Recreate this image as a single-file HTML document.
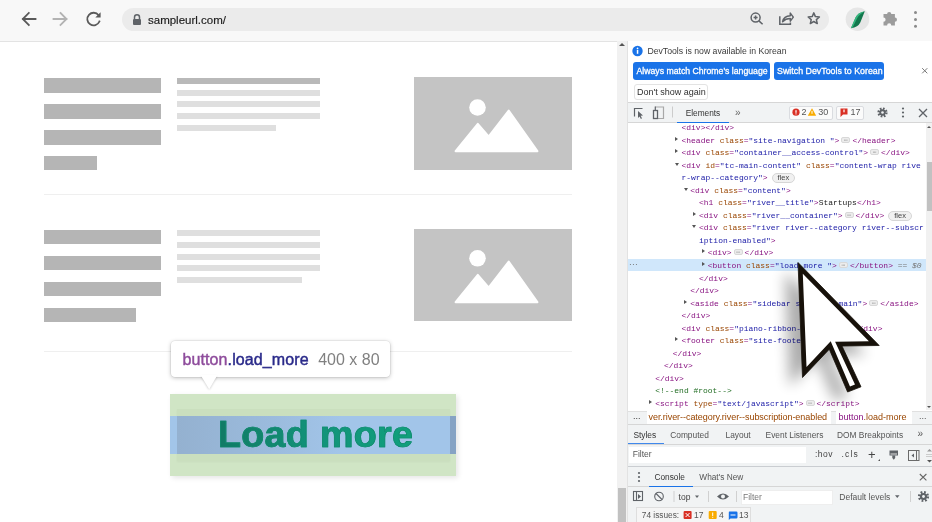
<!DOCTYPE html>
<html><head><meta charset="utf-8">
<style>
*{margin:0;padding:0;box-sizing:border-box}
html,body{width:932px;height:522px;overflow:hidden;background:#fff;font-family:"Liberation Sans",sans-serif;position:relative}
.a{position:absolute}
.bar{position:absolute;background:#b5b5b5}
.ln{position:absolute;background:#dfdfdf;height:6px}
.mono{font-family:"Liberation Mono",monospace;font-size:7.98px;white-space:pre;line-height:12.4px}
.t{color:#881280}.n{color:#994500}.v{color:#1a1aa6}.c{color:#236e25}.k{color:#222}
.tri{position:absolute;width:0;height:0}
.dots{display:inline-block;width:9px;height:6px;line-height:6px;font-size:6px;text-align:center;background:#ececec;border:1px solid #d8d8d8;border-radius:2px;color:#777;margin:0 2px;vertical-align:1px}
.flex{display:inline-block;font-family:"Liberation Sans",sans-serif;font-size:7.5px;line-height:8px;padding:0 5px;margin-left:4px;background:#f1f1f1;border:1px solid #d6d6d6;border-radius:5px;color:#444;vertical-align:0}
.eq{color:#777;font-style:italic}
.ui{font-size:9px;color:#333;white-space:nowrap}
#root{position:absolute;left:0;top:0;width:932px;height:522px;overflow:hidden;background:#fff;filter:blur(.3px)}
</style></head><body><div id="root">

<!-- browser toolbar -->
<div class="a" style="left:0;top:0;width:932px;height:41.6px;background:#f8f8f8;border-bottom:1px solid #e3e3e3"></div>
<svg class="a" style="left:0;top:0" width="932" height="41">
  <g fill="none" stroke-width="1.8" stroke-linecap="square">
    <path d="M23 19H35.5M28.8 12.9L22.8 19L28.8 25.1" stroke="#5a5a5a"/>
    <path d="M53.5 19H66.5M60.5 12.9L66.5 19L60.5 25.1" stroke="#b3b3b3"/>
    <path d="M98.6 15.2A6.3 6.3 0 1 0 99.4 21.5" stroke="#5a5a5a"/>
  </g>
  <path d="M95.3 17.6L100.6 17.6L100.6 12.3Z" fill="#5a5a5a"/>
</svg>
<div class="a" style="left:122px;top:7.8px;width:707px;height:23.4px;border-radius:11.7px;background:#ebebeb"></div>
<svg class="a" style="left:130px;top:12px" width="14" height="14">
  <path d="M4.5 7V5.2A2.5 2.5 0 0 1 9.5 5.2V7" fill="none" stroke="#5f6368" stroke-width="1.5"/>
  <rect x="3" y="7" width="8" height="6" rx="1" fill="#5f6368"/>
</svg>
<div class="a" style="left:148px;top:12.5px;font-size:11.5px;color:#1a1a1a;line-height:14px;-webkit-text-stroke:.15px #1a1a1a">sampleurl.com/</div>
<svg class="a" style="left:740px;top:0" width="192" height="41">
  <g fill="none" stroke="#5f6368" stroke-width="1.5">
    <circle cx="15.6" cy="17.6" r="4.5"/><path d="M18.9 20.9L22.6 24.3M13.6 17.6H17.6M15.6 15.6V19.6"/>
    <path d="M39.8 16.3V24.2H50.4V22.6"/><path d="M42.6 21.6C43.4 17.8 46.2 15.8 50.3 15.7V13.1L53.3 17.1L50.3 21.1V18.6C46.8 18.6 44.6 19.6 42.6 21.6Z" stroke-linejoin="round"/>
    <path d="M73.80 12.90L75.39 16.62L79.41 16.98L76.37 19.63L77.27 23.57L73.80 21.50L70.33 23.57L71.23 19.63L68.19 16.98L72.21 16.62Z" stroke-linejoin="round"/>
  </g>
  <circle cx="117.5" cy="19.2" r="11.8" fill="#e6e6e6"/>
  <path d="M110.9 28.3L115.5 17.5Q117.5 12.8 124.8 11.2L120.3 22.5Q118.2 27 110.9 28.3Z" fill="#12774c"/>
  <path d="M110.9 28.3L115.5 17.5Q117.5 12.8 124.8 11.2Q118.8 14.5 117 18.5L112.6 27.6Z" fill="#3cc58a" opacity=".8"/>
  <path d="M143.5 14h3.6a2.1 2.1 0 0 1 4.2 0h3.6v3.6a2.1 2.1 0 0 1 0 4.2v3.6h-3.6a2.1 2.1 0 0 0-4.2 0h-3.6v-3.6a2.1 2.1 0 0 0 0-4.2z" fill="#9c9c9c"/>
  <g fill="#8a8a8a"><circle cx="175.5" cy="12.4" r="1.5"/><circle cx="175.5" cy="19.4" r="1.5"/><circle cx="175.5" cy="26.2" r="1.5"/></g>
</svg>

<!-- page content -->
<div id="page">
  <div class="bar" style="left:44px;top:78px;width:117px;height:14.5px"></div>
  <div class="bar" style="left:44px;top:104px;width:117px;height:14.5px"></div>
  <div class="bar" style="left:44px;top:130px;width:117px;height:14.5px"></div>
  <div class="bar" style="left:44px;top:155.5px;width:53px;height:14.5px"></div>
  <div class="ln" style="left:177px;top:77.5px;width:143px;background:#b9b9b9"></div>
  <div class="ln" style="left:177px;top:89.5px;width:143px"></div>
  <div class="ln" style="left:177px;top:101px;width:143px"></div>
  <div class="ln" style="left:177px;top:113px;width:143px"></div>
  <div class="ln" style="left:177px;top:125px;width:99px"></div>
  <svg class="a" style="left:414px;top:77px" width="158" height="93"><rect width="158" height="93" fill="#c4c4c4"/>
    <circle cx="63.5" cy="30.5" r="8.3" fill="#fff"/>
    <path d="M41.6 74.2L63.8 46.9L74.6 59.5L94.7 33.5L123.4 74.2Z" fill="#fff" stroke="#fff" stroke-width="2" stroke-linejoin="round"/></svg>
  <div class="a" style="left:44px;top:194px;width:528px;height:1px;background:#efefef"></div>

  <div class="bar" style="left:44px;top:229.6px;width:117px;height:14.5px"></div>
  <div class="bar" style="left:44px;top:255.7px;width:117px;height:14.5px"></div>
  <div class="bar" style="left:44px;top:281.5px;width:117px;height:14.5px"></div>
  <div class="bar" style="left:44px;top:307.7px;width:92px;height:14.5px"></div>
  <div class="ln" style="left:177px;top:229.6px;width:143px"></div>
  <div class="ln" style="left:177px;top:242px;width:143px"></div>
  <div class="ln" style="left:177px;top:253.7px;width:143px"></div>
  <div class="ln" style="left:177px;top:265.4px;width:143px"></div>
  <div class="ln" style="left:177px;top:277.2px;width:125px"></div>
  <svg class="a" style="left:414px;top:229px" width="158" height="92"><rect width="158" height="92" fill="#c4c4c4"/>
    <circle cx="63.5" cy="29.3" r="8.3" fill="#fff"/>
    <path d="M41.6 73.2L63.8 45.9L74.6 58.5L94.7 32.5L123.4 73.2Z" fill="#fff" stroke="#fff" stroke-width="2" stroke-linejoin="round"/></svg>
  <div class="a" style="left:44px;top:351px;width:528px;height:1px;background:#efefef"></div>

  <!-- highlight -->
  <div class="a" style="left:170px;top:394px;width:286px;height:82px;background:#d0e5c5;box-shadow:2px 2px 5px rgba(0,0,0,.1)"></div>
  <div class="a" style="left:177px;top:409px;width:273px;height:52px;background:rgba(60,90,40,.045);box-shadow:0 1px 2px rgba(0,0,0,.04)"></div>
  <div class="a" style="left:170px;top:416px;width:286px;height:37.5px;background:#a2c5e9"></div>
  <div class="a" style="left:177px;top:416px;width:273px;height:37.5px;background:linear-gradient(90deg,#94b1d0 0%,#9bbbdd 35%,#a2c5e9 60%,#a2c5e9 100%)"></div>
  <div class="a" style="left:450px;top:416px;width:6px;height:37.5px;background:#86a3c4"></div>
  <div class="a" style="left:218px;top:414.5px;font-size:36px;font-weight:bold;line-height:40px;white-space:nowrap;letter-spacing:.3px;transform:scaleX(1.045);transform-origin:0 0;-webkit-text-stroke:.7px #118a6c;background:linear-gradient(90deg,#117a64,#12937a 50%,#10a07c);-webkit-background-clip:text;background-clip:text;color:transparent">Load more</div>

  <!-- tooltip -->
  <div class="a" style="left:171px;top:341px;width:218.5px;height:35.7px;background:#fff;border-radius:4px;box-shadow:0 0 0 .6px rgba(0,0,0,.08),0 1px 4px rgba(0,0,0,.25)"></div>
  <svg class="a" style="left:195px;top:370px" width="30" height="24"><defs><filter id="ts" x="-50%" y="-50%" width="200%" height="200%"><feGaussianBlur stdDeviation="1"/></filter></defs>
    <path d="M6 6.5L14.2 19.8L22 6.5Z" fill="#000" opacity=".22" filter="url(#ts)"/>
    <path d="M5.5 5L14.2 19.3L22.5 5Z" fill="#fff"/></svg>
  <div class="a" style="left:182.5px;top:350.5px;font-size:16px;line-height:18px;white-space:nowrap"><span style="color:#8e4c9c;letter-spacing:.1px;-webkit-text-stroke:.45px #8e4c9c">button</span><span style="color:#2a2a8a;letter-spacing:.1px;-webkit-text-stroke:.45px #2a2a8a">.load_more</span><span style="color:#808080;margin-left:9.5px">400 x 80</span></div>
</div>

<!-- page scrollbar -->
<div class="a" style="left:617px;top:41px;width:10px;height:481px;background:#f1f1f1"></div>
<div class="tri" style="left:618.5px;top:43px;border-left:3px solid transparent;border-right:3px solid transparent;border-bottom:3px solid #555"></div>
<div class="a" style="left:618px;top:488px;width:8px;height:34px;background:#c1c1c1"></div>

<!-- devtools -->
<div class="a" style="left:627px;top:41px;width:305px;height:481px;background:#fff;border-left:1px solid #e2e2e2"></div>
<!-- infobar -->
<svg class="a" style="left:631px;top:45px" width="13" height="13"><circle cx="6.5" cy="6" r="5.2" fill="#1a73e8"/><rect x="5.8" y="5" width="1.5" height="3.8" fill="#fff"/><circle cx="6.55" cy="3.4" r=".85" fill="#fff"/></svg>
<div class="a ui" style="left:647.4px;top:46px;font-size:8.7px;line-height:11px;color:#3a3a3a">DevTools is now available in Korean</div>
<div class="a" style="left:633px;top:62px;width:137px;height:18px;background:#1a73e8;border-radius:3px"></div>
<div class="a ui" style="left:636.5px;top:65.5px;font-size:8.7px;line-height:11px;color:#fff;-webkit-text-stroke:.3px #fff">Always match Chrome's language</div>
<div class="a" style="left:774px;top:62px;width:110px;height:18px;background:#1a73e8;border-radius:3px"></div>
<div class="a ui" style="left:777px;top:65.5px;font-size:8.85px;line-height:11px;color:#fff;-webkit-text-stroke:.3px #fff">Switch DevTools to Korean</div>
<svg class="a" style="left:920px;top:66px" width="10" height="10"><path d="M2.2 2.2L7.3 7.3M7.3 2.2L2.2 7.3" stroke="#777" stroke-width="1"/></svg>
<div class="a" style="left:633.5px;top:83.5px;width:74px;height:16.5px;border:1px solid #e3e3e3;border-radius:3px"></div>
<div class="a ui" style="left:637px;top:86.5px;font-size:9px;line-height:11px;color:#303030">Don't show again</div>
<!-- toolbar -->
<div class="a" style="left:628px;top:102px;width:304px;height:21px;background:#f1f3f4;border-top:1px solid #d6d6d6;border-bottom:1px solid #d6d6d6"></div>
<svg class="a" style="left:628px;top:102px" width="304" height="21">
  <g fill="none" stroke="#5f6368" stroke-width="1.2">
    <path d="M6.5 14.5V6.5H14.5"/>
    <path d="M27.3 5H35.5V16.5H29.5" stroke="#a8a8a8"/><path d="M27.3 4.5V8.5"/><rect x="25.5" y="8.5" width="4" height="8" fill="#f1f3f4" stroke-width="1.3"/>
  </g>
  <path d="M10 9L15 13.5L12.6 13.8L14 16.3L12.9 16.9L11.6 14.4L10 16Z" fill="#5f6368"/>
  <rect x="44" y="4.5" width="1" height="11" fill="#ccc"/>
</svg>
<div class="a ui" style="left:685.7px;top:107.8px;font-size:8.3px;line-height:11px;color:#333">Elements</div>
<div class="a" style="left:677px;top:121.5px;width:52px;height:1.5px;background:#1a73e8"></div>
<div class="a ui" style="left:735px;top:107px;font-size:10px;line-height:11px;color:#666">»</div>
<div class="a" style="left:788.5px;top:105.5px;width:44px;height:14px;border:1px solid #dadce0;border-radius:2px;background:#fbfbfb"></div>
<svg class="a" style="left:791px;top:107px" width="10" height="10"><circle cx="5" cy="5.2" r="3.6" fill="#d93025"/><rect x="4.4" y="3.2" width="1.2" height="2.6" fill="#fff"/><rect x="4.4" y="6.4" width="1.2" height="1" fill="#fff"/></svg>
<div class="a ui" style="left:801.5px;top:107px;font-size:9px;line-height:11px;color:#555">2</div>
<svg class="a" style="left:807px;top:107px" width="10" height="10"><path d="M5 1.3L9.2 8.8H.8Z" fill="#f9ab00"/><rect x="4.5" y="3.8" width="1" height="3" fill="#fff"/></svg>
<div class="a ui" style="left:818.3px;top:107px;font-size:9px;line-height:11px;color:#555">30</div>
<div class="a" style="left:836px;top:105.5px;width:28px;height:14px;border:1px solid #dadce0;border-radius:2px;background:#fbfbfb"></div>
<svg class="a" style="left:838.5px;top:107px" width="10" height="11"><path d="M1.5 1.5H8.5V7.5H4L1.5 10Z" fill="#d93025"/><rect x="4.4" y="2.5" width="1.2" height="2.8" fill="#fff"/></svg>
<div class="a ui" style="left:850.5px;top:107px;font-size:9px;line-height:11px;color:#555">17</div>
<svg class="a" style="left:876px;top:106px" width="13" height="13"><circle cx="6.5" cy="6.5" r="3.8" fill="none" stroke="#5f6368" stroke-width="2.6" stroke-dasharray="1.6 1.38"/><circle cx="6.5" cy="6.5" r="3.2" fill="#5f6368"/><circle cx="6.5" cy="6.5" r="1.3" fill="#f1f3f4"/></svg>
<svg class="a" style="left:899px;top:106px" width="8" height="13"><g fill="#5f6368"><circle cx="4" cy="2.5" r="1.1"/><circle cx="4" cy="6.5" r="1.1"/><circle cx="4" cy="10.5" r="1.1"/></g></svg>
<svg class="a" style="left:918px;top:107.5px" width="10" height="10"><path d="M1 1L9 9M9 1L1 9" stroke="#5f6368" stroke-width="1.3"/></svg>
<!-- elements tree -->
<div class="a" style="left:628px;top:259.4px;width:298px;height:11.6px;background:#d0e7fb"></div>
<div class="a ui" style="left:629px;top:259px;font-size:8px;line-height:11px;color:#666;letter-spacing:.3px">···</div>
<div class="a mono" style="left:681.5px;top:122.0px"><span class="t">&lt;div&gt;&lt;/div&gt;</span></div>
<div class="tri" style="left:675.2px;top:136.5px;border-top:2.7px solid transparent;border-bottom:2.7px solid transparent;border-left:3.8px solid #555"></div>
<div class="a mono" style="left:681.5px;top:134.5px"><span class="t">&lt;header</span> <span class="n">class</span><span class="t">=</span><span class="v">"site-navigation "</span><span class="t">&gt;</span><span class="dots">⋯</span><span class="t">&lt;/header&gt;</span></div>
<div class="tri" style="left:675.2px;top:149.1px;border-top:2.7px solid transparent;border-bottom:2.7px solid transparent;border-left:3.8px solid #555"></div>
<div class="a mono" style="left:681.5px;top:147.1px"><span class="t">&lt;div</span> <span class="n">class</span><span class="t">=</span><span class="v">"container__access-control"</span><span class="t">&gt;</span><span class="dots">⋯</span><span class="t">&lt;/div&gt;</span></div>
<div class="tri" style="left:674.9px;top:162.5px;border-left:2.7px solid transparent;border-right:2.7px solid transparent;border-top:3.8px solid #555"></div>
<div class="a mono" style="left:681.5px;top:159.6px"><span class="t">&lt;div</span> <span class="n">id</span><span class="t">=</span><span class="v">"tc-main-content"</span> <span class="n">class</span><span class="t">=</span><span class="v">"content-wrap rive</span></div>
<div class="a mono" style="left:681.5px;top:172.2px"><span class="v">r-wrap--category"</span><span class="t">&gt;</span><span class="flex">flex</span></div>
<div class="tri" style="left:683.6px;top:187.6px;border-left:2.7px solid transparent;border-right:2.7px solid transparent;border-top:3.8px solid #555"></div>
<div class="a mono" style="left:690.2px;top:184.7px"><span class="t">&lt;div</span> <span class="n">class</span><span class="t">=</span><span class="v">"content"</span><span class="t">&gt;</span></div>
<div class="a mono" style="left:699.0px;top:197.2px"><span class="t">&lt;h1</span> <span class="n">class</span><span class="t">=</span><span class="v">"river__title"</span><span class="t">&gt;</span><span class="k">Startups</span><span class="t">&lt;/h1&gt;</span></div>
<div class="tri" style="left:692.8px;top:211.8px;border-top:2.7px solid transparent;border-bottom:2.7px solid transparent;border-left:3.8px solid #555"></div>
<div class="a mono" style="left:699.0px;top:209.8px"><span class="t">&lt;div</span> <span class="n">class</span><span class="t">=</span><span class="v">"river__container"</span><span class="t">&gt;</span><span class="dots">⋯</span><span class="t">&lt;/div&gt;</span><span class="flex">flex</span></div>
<div class="tri" style="left:692.4px;top:225.2px;border-left:2.7px solid transparent;border-right:2.7px solid transparent;border-top:3.8px solid #555"></div>
<div class="a mono" style="left:699.0px;top:222.3px"><span class="t">&lt;div</span> <span class="n">class</span><span class="t">=</span><span class="v">"river river--category river--subscr</span></div>
<div class="a mono" style="left:699.0px;top:234.9px"><span class="v">iption-enabled"</span><span class="t">&gt;</span></div>
<div class="tri" style="left:701.5px;top:249.4px;border-top:2.7px solid transparent;border-bottom:2.7px solid transparent;border-left:3.8px solid #555"></div>
<div class="a mono" style="left:707.7px;top:247.4px"><span class="t">&lt;div&gt;</span><span class="dots">⋯</span><span class="t">&lt;/div&gt;</span></div>
<div class="tri" style="left:701.5px;top:261.9px;border-top:2.7px solid transparent;border-bottom:2.7px solid transparent;border-left:3.8px solid #555"></div>
<div class="a mono" style="left:707.7px;top:259.9px"><span class="t">&lt;button</span> <span class="n">class</span><span class="t">=</span><span class="v">"load_more "</span><span class="t">&gt;</span><span class="dots">⋯</span><span class="t">&lt;/button&gt;</span><span class="eq"> == $0</span></div>
<div class="a mono" style="left:699.0px;top:272.5px"><span class="t">&lt;/div&gt;</span></div>
<div class="a mono" style="left:690.2px;top:285.0px"><span class="t">&lt;/div&gt;</span></div>
<div class="tri" style="left:684.0px;top:299.6px;border-top:2.7px solid transparent;border-bottom:2.7px solid transparent;border-left:3.8px solid #555"></div>
<div class="a mono" style="left:690.2px;top:297.6px"><span class="t">&lt;aside</span> <span class="n">class</span><span class="t">=</span><span class="v">"sidebar sidebar--main"</span><span class="t">&gt;</span><span class="dots">⋯</span><span class="t">&lt;/aside&gt;</span></div>
<div class="a mono" style="left:681.5px;top:310.1px"><span class="t">&lt;/div&gt;</span></div>
<div class="a mono" style="left:681.5px;top:322.6px"><span class="t">&lt;div</span> <span class="n">class</span><span class="t">=</span><span class="v">"piano-ribbon-container"</span><span class="t">&gt;&lt;/div&gt;</span></div>
<div class="tri" style="left:675.2px;top:337.2px;border-top:2.7px solid transparent;border-bottom:2.7px solid transparent;border-left:3.8px solid #555"></div>
<div class="a mono" style="left:681.5px;top:335.2px"><span class="t">&lt;footer</span> <span class="n">class</span><span class="t">=</span><span class="v">"site-footer"</span><span class="t">&gt;</span><span class="dots">⋯</span><span class="t">&lt;/footer&gt;</span></div>
<div class="a mono" style="left:672.7px;top:347.7px"><span class="t">&lt;/div&gt;</span></div>
<div class="a mono" style="left:664.0px;top:360.3px"><span class="t">&lt;/div&gt;</span></div>
<div class="a mono" style="left:655.2px;top:372.8px"><span class="t">&lt;/div&gt;</span></div>
<div class="a mono" style="left:655.2px;top:385.3px"><span class="c">&lt;!--end #root--&gt;</span></div>
<div class="tri" style="left:649.0px;top:399.9px;border-top:2.7px solid transparent;border-bottom:2.7px solid transparent;border-left:3.8px solid #555"></div>
<div class="a mono" style="left:655.2px;top:397.9px"><span class="t">&lt;script</span> <span class="n">type</span><span class="t">=</span><span class="v">"text/javascript"</span><span class="t">&gt;</span><span class="dots">⋯</span><span class="t">&lt;/script&gt;</span></div>

<div class="a" style="left:926px;top:123px;width:6px;height:287px;background:#f1f1f1"></div>
<div class="a" style="left:926.5px;top:162px;width:5.5px;height:49px;background:#c1c1c1"></div>
<div class="tri" style="left:927px;top:126px;border-left:2.5px solid transparent;border-right:2.5px solid transparent;border-bottom:2.5px solid #555"></div>
<div class="tri" style="left:927px;top:406px;border-left:2.5px solid transparent;border-right:2.5px solid transparent;border-top:2.5px solid #555"></div>
<!-- breadcrumbs -->
<div class="a" style="left:628px;top:410.5px;width:304px;height:13.5px;background:#f1f3f4;border-top:1px solid #e0e0e0"></div>
<div class="a ui" style="left:633px;top:411px;font-size:9px;line-height:11px;color:#333">...</div>
<div class="a" style="left:647px;top:411px;width:184px;height:13px;background:#fff"></div>
<div class="a ui" style="left:648.5px;top:412px;font-size:9px;line-height:11px;color:#994500;letter-spacing:-.05px">ver.river--category.river--subscription-enabled</div>
<div class="a" style="left:836px;top:411px;width:76px;height:13px;background:#fff"></div>
<div class="a ui" style="left:838.5px;top:412px;font-size:9px;line-height:11px;color:#994500"><span style="color:#881280">button</span>.load-more</div>
<div class="a ui" style="left:919px;top:411px;font-size:9px;line-height:11px;color:#555">...</div>
<!-- styles tabs -->
<div class="a" style="left:628px;top:424px;width:304px;height:20.5px;background:#f1f3f4;border-top:1px solid #d6d6d6;border-bottom:1px solid #d6d6d6"></div>
<div class="a ui" style="left:633.4px;top:429.5px;font-size:8.4px;line-height:11px;color:#333">Styles</div>
<div class="a ui" style="left:670.2px;top:429.5px;font-size:8.4px;line-height:11px;color:#555">Computed</div>
<div class="a ui" style="left:725.5px;top:429.5px;font-size:8.4px;line-height:11px;color:#555">Layout</div>
<div class="a ui" style="left:765.6px;top:429.5px;font-size:8.4px;line-height:11px;color:#555">Event Listeners</div>
<div class="a ui" style="left:837px;top:429.5px;font-size:8.4px;line-height:11px;color:#555">DOM Breakpoints</div>
<div class="a ui" style="left:917.5px;top:428px;font-size:10px;line-height:11px;color:#555">»</div>
<div class="a" style="left:628px;top:443.2px;width:36px;height:1.2px;background:#3f88ec"></div>
<!-- filter -->
<div class="a" style="left:628px;top:444.5px;width:304px;height:22px;background:#f1f3f4"></div>
<div class="a" style="left:629px;top:446.5px;width:177px;height:16px;background:#fff"></div>
<div class="a ui" style="left:632.7px;top:449px;font-size:8.5px;line-height:11px;color:#555">Filter</div>
<div class="a ui" style="left:815px;top:449px;font-size:8.5px;line-height:11px;color:#444;letter-spacing:.5px">:hov</div>
<div class="a ui" style="left:841.6px;top:449px;font-size:8.5px;line-height:11px;color:#444;letter-spacing:1.1px">.cls</div>
<div class="a ui" style="left:868px;top:448px;font-size:13px;line-height:14px;color:#444">+</div><div class="tri" style="left:878px;top:459px;border-left:2px solid transparent;border-bottom:2px solid #555"></div>
<svg class="a" style="left:885px;top:448px" width="47" height="16">
  <rect x="4.5" y="2.5" width="8.5" height="5" fill="#5f6368"/><rect x="5.5" y="5.5" width="6.5" height="1" fill="#ddd"/><path d="M7.3 7.5H10.2V10L8.75 11.8L7.3 10Z" fill="#5f6368"/>
  <g fill="none" stroke="#6a6a6a" stroke-width="1"><rect x="23.5" y="2.5" width="10.5" height="10"/><path d="M31.5 3V12.5"/></g>
  <path d="M26.5 7.5L29 5.5V9.5Z" fill="#5f6368"/>
  <path d="M42 3.5L44.5 1L47 3.5Z" fill="#999"/><rect x="41" y="6" width="6" height="1" fill="#ccc"/><rect x="41" y="8" width="6" height="1" fill="#ccc"/><path d="M42 12L44.5 14.5L47 12Z" fill="#555"/>
</svg>
<div class="a" style="left:628px;top:466px;width:304px;height:1px;background:#cacdd1"></div>
<!-- drawer -->
<div class="a" style="left:628px;top:467px;width:304px;height:20px;background:#f1f3f4;border-bottom:1px solid #d6d6d6"></div>
<svg class="a" style="left:636px;top:471px" width="6" height="12"><g fill="#5f6368"><circle cx="3" cy="2" r="1.1"/><circle cx="3" cy="6" r="1.1"/><circle cx="3" cy="10" r="1.1"/></g></svg>
<div class="a ui" style="left:654.5px;top:472px;font-size:8.3px;line-height:11px;color:#333">Console</div>
<div class="a ui" style="left:699.3px;top:472px;font-size:8.3px;line-height:11px;color:#555">What's New</div>
<div class="a" style="left:648.5px;top:485.5px;width:44px;height:1.5px;background:#1a73e8"></div>
<svg class="a" style="left:918px;top:472px" width="10" height="10"><path d="M1.8 2L8.4 8.4M8.4 2L1.8 8.4" stroke="#666" stroke-width="1.1"/></svg>
<!-- console toolbar -->
<div class="a" style="left:628px;top:487px;width:304px;height:35px;background:#f1f3f4"></div>
<svg class="a" style="left:628px;top:487px" width="304" height="19">
  <g fill="none" stroke="#5f6368" stroke-width="1.1"><rect x="5.5" y="4.5" width="9" height="9"/><path d="M8.5 4.5V13.5"/><circle cx="31" cy="9.5" r="4.3"/><path d="M28 6.5L34 12.5"/></g>
  <path d="M10 7L13 9.5L10 12Z" fill="#5f6368"/>
  <rect x="45.5" y="4" width="1" height="11" fill="#d0d0d0"/>
  <path d="M67 8.5L71 8.5L69 11Z" fill="#5f6368"/>
  <rect x="80" y="4" width="1" height="11" fill="#d0d0d0"/>
  <path d="M89 9.5Q95 3.5 101 9.5Q95 15.5 89 9.5Z" fill="#5f6368"/><circle cx="95" cy="9.5" r="2" fill="#f1f3f4"/>
  <rect x="108" y="4" width="1" height="11" fill="#d0d0d0"/>
  <path d="M267 8.3L271.5 8.3L269.25 11Z" fill="#5f6368"/>
  <rect x="282" y="4" width="1" height="11" fill="#d0d0d0"/>
  <circle cx="295.5" cy="9.5" r="4.3" fill="none" stroke="#5f6368" stroke-width="2.6" stroke-dasharray="1.7 1.68"/><circle cx="295.5" cy="9.5" r="3.6" fill="#5f6368"/><circle cx="295.5" cy="9.5" r="1.4" fill="#f1f3f4"/>
</svg>
<div class="a ui" style="left:678.6px;top:491.5px;font-size:8.5px;line-height:11px;color:#444">top</div>
<div class="a" style="left:740.5px;top:489.5px;width:92px;height:15px;background:#fff;border:1px solid #eee"></div>
<div class="a ui" style="left:743px;top:491.5px;font-size:8.5px;line-height:11px;color:#777">Filter</div>
<div class="a ui" style="left:839.3px;top:491.5px;font-size:8.5px;line-height:11px;color:#555">Default levels</div>
<!-- issues -->
<div class="a" style="left:636px;top:507px;width:115px;height:16px;border:1px solid #dedede;border-bottom:none;background:#f5f5f5"></div>
<div class="a ui" style="left:641.8px;top:510px;font-size:8.3px;line-height:11px;color:#555">74 issues:</div>
<svg class="a" style="left:683px;top:510px" width="60" height="11">
  <rect x=".6" y="1" width="8" height="8" rx="1" fill="#d93025"/><path d="M2.6 3L6.6 7M6.6 3L2.6 7" stroke="#fff" stroke-width="1"/>
  <rect x="25.7" y="1" width="8" height="8" rx="1" fill="#f9ab00"/><rect x="29.2" y="2.5" width="1" height="3.5" fill="#fff"/><rect x="29.2" y="6.8" width="1" height="1" fill="#fff"/>
  <path d="M46.3 1.5H53.3Q54.5 1.5 54.5 2.7V7.3Q54.5 8.5 53.3 8.5H47.5L45.8 10V2.7Q45.8 1.5 46.3 1.5Z" fill="#1a73e8"/><rect x="47.5" y="4.5" width="5" height="1" fill="#fff"/>
</svg>
<div class="a ui" style="left:694px;top:510px;font-size:8.5px;line-height:11px;color:#555">17</div>
<div class="a ui" style="left:719px;top:510px;font-size:8.5px;line-height:11px;color:#555">4</div>
<div class="a ui" style="left:739px;top:510px;font-size:8.5px;line-height:11px;color:#555">13</div>
<!-- cursor -->
<svg class="a" style="left:740px;top:220px" width="192" height="210">
  <defs><filter id="sh" x="-50%" y="-50%" width="200%" height="200%"><feGaussianBlur stdDeviation="7"/></filter></defs>
  <g transform="translate(20,20)">
  <path d="M38.0 22.5L42.5 137.5L69.3 109.2L87.6 152.0L101.0 146.8L82.0 106.0L119.2 105.5Z" fill="#000" opacity=".32" filter="url(#sh)" transform="translate(-13,9)"/>
  <path d="M38.0 22.5L42.5 137.5L69.3 109.2L87.6 152.0L101.0 146.8L82.0 106.0L119.2 105.5Z" fill="#17110a" stroke="#17110a" stroke-width=".8" stroke-linejoin="round"/>
  <path d="M42.8 33.7L46.5 126.9L70.7 101.3L90.0 146.4L95.0 144.4L75.1 101.7L108.9 101.2Z" fill="#fff"/>
  </g>
</svg>
</div></body></html>
